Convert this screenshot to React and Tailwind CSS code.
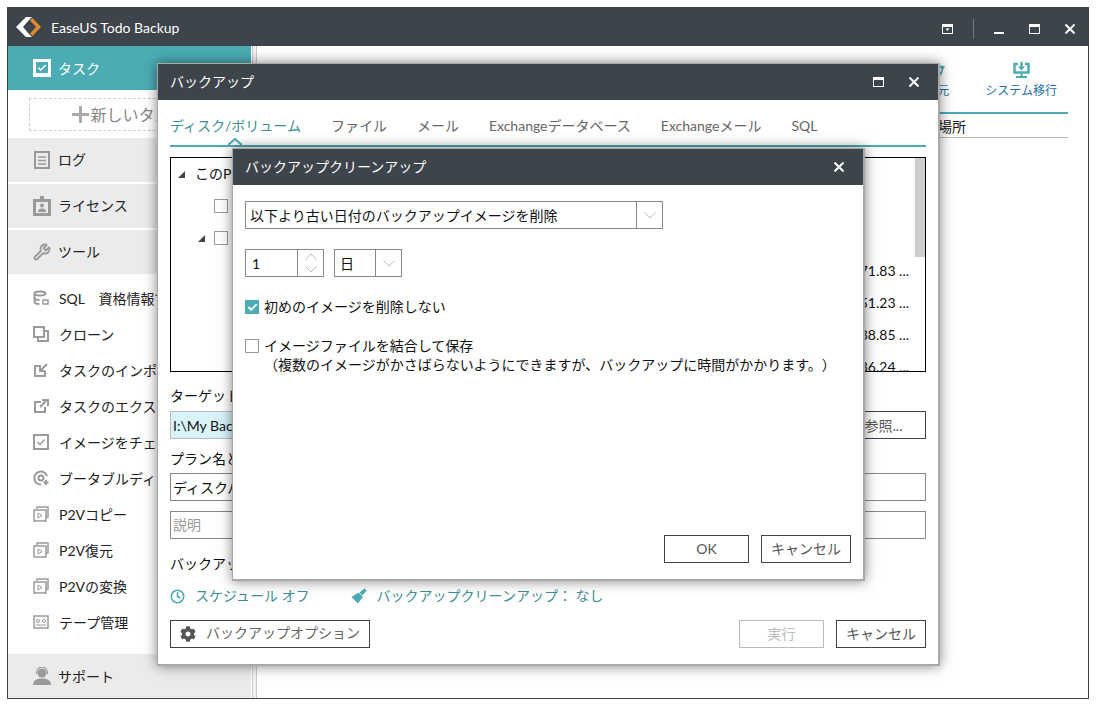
import React from "react";
import { Clock, Wrench, Check } from "lucide-react";
import { FaCog } from "react-icons/fa";

const fontStack = "font-['Lato','Noto_Sans_CJK_JP',sans-serif] [text-spacing-trim:space-all]";

// ================================> small drawn icons
const Logo = () => (
  <svg width="25" height="20" viewBox="0 0 25 20">
    <path d="M10 0 L0 10 L10 20 L16 20 L13 17 L7 10 L13 3 L16 0 Z" fill="#fff" />
    <path d="M14 3.500 L16.500 1 L25 10 L16.500 19 L14 16.500 L20 10 Z" fill="#e08a2e" />
  </svg>
);

const Square = ({ children }) => (
  <svg width="16" height="16" viewBox="0 0 16 16" fill="none" stroke="#9a9a9a" strokeWidth="2">
    {children}
  </svg>
);

const listIcons = {
  sql: (
    <Square>
      <ellipse cx="7" cy="3.500" rx="5.500" ry="2" />
      <path d="M1.500 4v8c0 1 2 2 5 2M1.500 8c0 1 2 2 5 2" />
      <rect x="10" y="10" width="5" height="4" strokeWidth="1.500" />
    </Square>
  ),
  clone: (
    <Square>
      <rect x="1" y="1" width="10" height="10" />
      <path d="M5 11v4h10V5h-4" />
    </Square>
  ),
  import: (
    <Square>
      <path d="M8 4H2v10h10V9" />
      <path d="M14 2L8 8M7 4v5h5" strokeWidth="2" />
    </Square>
  ),
  export: (
    <Square>
      <path d="M8 4H2v10h10V9" />
      <path d="M7 9l6-6M9 2h6v6" strokeWidth="2" />
    </Square>
  ),
  check: (
    <Square>
      <rect x="1" y="1" width="14" height="14" />
      <path d="M4.500 8l2.500 2.500 4.500-5" strokeWidth="1.500" />
    </Square>
  ),
  boot: (
    <Square>
      <path d="M14 6A6.500 6.500 0 1 0 8 14.500" />
      <circle cx="8" cy="8" r="2.500" />
      <path d="M13 10v5M10.500 12.500h5" />
    </Square>
  ),
  p2v: (
    <Square>
      <path d="M4 3V1h11v10h-2" strokeWidth="1.500" />
      <rect x="1" y="4" width="12" height="11" strokeWidth="1.500" />
      <path d="M5 7l4 2.500L5 12z" strokeWidth="1" />
    </Square>
  ),
  tape: (
    <Square>
      <rect x="1" y="2" width="14" height="12" strokeWidth="1.500" />
      <circle cx="5" cy="7" r="1.500" strokeWidth="1" />
      <circle cx="11" cy="7" r="1.500" strokeWidth="1" />
      <path d="M3 11h10" strokeWidth="1" />
    </Square>
  ),
};

const WinMax = () => (
  <svg width="11" height="10" viewBox="0 0 11 10" fill="none" stroke="#fff">
    <rect x="0.500" y="0.500" width="10" height="9" />
    <path d="M0 2h11" strokeWidth="2" />
  </svg>
);

const WinClose = () => (
  <svg width="10" height="10" viewBox="0 0 10 10" stroke="#fff" strokeWidth="2">
    <path d="M0.500 0.500l9 9M9.500 0.500l-9 9" />
  </svg>
);

const Chevron = ({ up = false }) => (
  <svg width="12" height="7" viewBox="0 0 12 7" fill="none" stroke="#bbb">
    <path d={up ? "M0.500 6.500L6 1l5.500 5.500" : "M0.500 0.500L6 6l5.500-5.500"} />
  </svg>
);

const Triangle = () => (
  <svg width="7" height="7" viewBox="0 0 7 7" className="shrink-0">
    <path d="M7 0V7H0z" fill="#444" />
  </svg>
);

// ================================> sidebar
const SideHeader = ({ icon, label }) => (
  <div className="flex h-[44px] items-center gap-[7px] bg-[#ebebeb] pl-[25px] text-[14px] text-[#222]">
    <span className="flex w-[18px] justify-center">{icon}</span>
    <span className="pb-[2px]">{label}</span>
  </div>
);

const sideItems = [
  ["sql", "SQL　資格情報で接続"],
  ["clone", "クローン"],
  ["import", "タスクのインポート"],
  ["export", "タスクのエクスポート"],
  ["check", "イメージをチェック"],
  ["boot", "ブータブルディスクの作成"],
  ["p2v", "P2Vコピー"],
  ["p2v", "P2V復元"],
  ["p2v", "P2Vの変換"],
  ["tape", "テープ管理"],
];

const Sidebar = () => (
  <div className="flex w-[243px] flex-col">
    <div className="flex h-[44px] items-center gap-[7px] bg-[#4bacb4] pl-[25px] text-[14px] text-white">
      <span className="flex h-[18px] w-[18px] items-start justify-center bg-white pt-[3px]">
        <span className="flex h-[11px] w-[12px] items-center justify-center bg-[#4bacb4]">
          <Check size={10} color="#fff" strokeWidth={3.500} />
        </span>
      </span>
      タスク
    </div>
    <div className="px-[21px] pt-[8px] pb-[7px]">
      <div className="flex h-[33px] items-center justify-center gap-[1px] border border-dashed border-[#d0d0d0] text-[16px] text-[#888]">
        <svg width="17" height="17" viewBox="0 0 17 17" fill="#aaa">
          <path d="M7 0h3v7h7v3h-7v7H7v-7H0V7h7z" />
        </svg>
        新しいタスク
      </div>
    </div>
    <div className="flex flex-col gap-[2px]">
      <SideHeader
        label="ログ"
        icon={
          <svg width="16" height="18" viewBox="0 0 16 18" fill="none" stroke="#9a9a9a" strokeWidth="2">
            <rect x="1" y="1" width="14" height="16" />
            <path d="M4 6h8M4 9.500h8M4 13h8" strokeWidth="1.500" />
          </svg>
        }
      />
      <SideHeader
        label="ライセンス"
        icon={
          <svg width="18" height="20" viewBox="0 0 18 20" fill="#9a9a9a">
            <path d="M0 3h7V0h4v3h7v17H0z" />
            <rect x="3" y="6" width="12" height="11" fill="#ebebeb" />
            <circle cx="9" cy="9.500" r="2" />
            <path d="M5 16c0-3 2-3.500 4-3.500s4 .5 4 3.500z" />
          </svg>
        }
      />
      <SideHeader label="ツール" icon={<Wrench size={18} color="#9a9a9a" strokeWidth={2.500} />} />
    </div>
    <div className="flex flex-1 flex-col pt-[6px]">
      {sideItems.map(([icon, label], idx) => (
        <div key={idx} className="flex h-[36px] shrink-0 items-center gap-[10px] whitespace-nowrap pl-[25px] text-[14px] text-[#222]">
          <span className="flex w-[16px] justify-center">{listIcons[icon]}</span>
          {label}
        </div>
      ))}
    </div>
    <div className="flex h-[44px] items-center gap-[7px] bg-[#ebebeb] pl-[25px] text-[14px] text-[#222]">
      <svg width="18" height="18" viewBox="0 0 18 18" fill="#9a9a9a">
        <circle cx="9" cy="6" r="4.500" />
        <path d="M3 7V5.500a6 6 0 0 1 12 0V7h-1.200V5.500a4.800 4.800 0 0 0-9.600 0V7z" />
        <path d="M0 18c0-5 4-6.500 9-6.500s9 1.500 9 6.500z" />
      </svg>
      サポート
    </div>
  </div>
);

// ================================> background page on the right
const MainPane = () => (
  <div className="flex flex-1 flex-col items-end pr-[20px]">
    <div className="flex h-[66px] w-full items-center justify-end pt-[4px]">
      <div className="flex flex-col items-center gap-[4px] pr-[26px] text-[12px] text-[#1c6fa8]">
        <span className="h-[15px] w-[14px] bg-[#4bacb4]" />
        バックアップ
      </div>
      <div className="flex flex-col items-center gap-[4px] pr-[25px] text-[12px] text-[#1c6fa8]">
        <svg width="18" height="16" viewBox="0 0 18 16" fill="none" stroke="#4bacb4" strokeWidth="2">
          <path d="M14 8a6 6 0 1 1-3-5.200" />
          <path d="M11 3.500L17 4l-2.500 5z" fill="#4bacb4" stroke="none" />
        </svg>
        復元
      </div>
      <div className="flex flex-col items-center gap-[4px] px-[11px] text-[12px] text-[#1c6fa8]">
        <svg width="17" height="16" viewBox="0 0 17 16" fill="none" stroke="#4bacb4" strokeWidth="2.500">
          <path d="M5 2H1.500v8.500h14V2H12" />
          <path d="M8.500 0v6" />
          <path d="M5 4.500h7L8.500 8.500z" fill="#4bacb4" stroke="none" />
          <path d="M8.500 11v3M3 15h11" strokeWidth="2" />
        </svg>
        システム移行
      </div>
    </div>
    <div className="h-[2px] w-[400px] bg-[#4bacb4]" />
    <div className="flex h-[24px] w-[400px] items-center border-b border-[#bbb] pl-[270px] pt-[2px] text-[14px] text-[#111]">
      場所
    </div>
  </div>
);

// ================================> backup window
const tabs = ["ファイル", "メール", "Exchangeデータベース", "Exchangeメール", "SQL"];

const sizes = ["71.83 ...", "51.23 ...", "38.85 ...", "36.24 ..."];

const Box = ({ className = "" }) => (
  <span className={`block h-[14px] w-[14px] shrink-0 border border-[#999] bg-white ${className}`} />
);

const BackupWindow = () => (
  <div className="absolute left-[157px] top-[63px] flex h-[603px] w-[783px] flex-col border border-r-2 border-b-2 border-[#a8a8a8] shadow-[0_0_12px_rgba(0,0,0,0.5)]">
    <div className="flex h-[36px] shrink-0 items-center justify-between bg-[#3e444c] pb-[2px] pl-[12px] pr-[19px] text-[14px] text-white">
      バックアップ
      <div className="flex items-center gap-[25px] pt-[2px]">
        <WinMax />
        <WinClose />
      </div>
    </div>
    <div className="flex flex-1 flex-col bg-white px-[12px] text-[#111]">
      <div className="flex h-[45px] shrink-0 items-end gap-[30px] whitespace-nowrap pb-[9px] text-[14px] text-[#666]">
        <span className="text-[#3d8f96]">ディスク/ボリューム</span>
        {tabs.map((tab) => (
          <span key={tab}>{tab}</span>
        ))}
      </div>
      <div className="relative h-[2px] shrink-0 bg-[#4bacb4]">
        <svg width="14" height="7" viewBox="0 0 14 7" className="absolute bottom-full left-[58px]" fill="#fff" stroke="#4bacb4" strokeWidth="2">
          <path d="M0 7l7-6 7 6" />
        </svg>
      </div>
      <div className="mt-[10px] flex h-[215px] shrink-0 overflow-hidden border border-black">
        <div className="flex-1 text-[14px]">
          <div className="flex h-[32px] items-center pl-[7px]">
            <Triangle />
            <span className="ml-[10px] pb-[2px]">このPC</span>
          </div>
          <div className="flex h-[32px] items-center pl-[43px]">
            <Box />
          </div>
          <div className="flex h-[32px] items-center pl-[27px]">
            <Triangle />
            <Box className="ml-[9px]" />
          </div>
          {sizes.map((size) => (
            <div key={size} className="flex h-[32px] items-center justify-end whitespace-nowrap pr-[6px]">
              {size}
            </div>
          ))}
        </div>
        <div className="w-[10px]">
          <div className="h-[99px] bg-[#cdcdcd]" />
        </div>
      </div>
      <div className="mt-[14px] h-[20px] shrink-0 text-[14px] leading-[20px]">ターゲット</div>
      <div className="mt-[5px] flex h-[28px] shrink-0 gap-[6px]">
        <div className="flex flex-1 items-center border border-[#bbb] bg-[#d8f3fa] pl-[2px] text-[14px]">
          I:\My Backups
        </div>
        <div className="flex w-[85px] items-center justify-center border border-[#3e444c] text-[14px] text-[#555]">
          参照...
        </div>
      </div>
      <div className="mb-[2px] mt-[8px] h-[24px] shrink-0 text-[14px] leading-[24px]">プラン名と説明</div>
      <div className="flex h-[28px] shrink-0 items-center border border-[#888] pl-[2px] text-[14px]">
        ディスクパーティション
      </div>
      <div className="mt-[10px] flex h-[28px] shrink-0 items-center border border-[#888] pb-[2px] pl-[2px] text-[14px] text-[#999]">
        説明
      </div>
      <div className="mb-[1px] mt-[14px] h-[22px] shrink-0 text-[14px] leading-[22px]">バックアップ</div>
      <div className="mt-[10px] flex h-[20px] shrink-0 items-center text-[14px] text-[#3d8f96]">
        <Clock size={15} color="#4bacb4" strokeWidth={2.500} />
        <span className="ml-[10px] pb-[2px]">スケジュール オフ</span>
        <svg width="16" height="16" viewBox="0 0 16 16" fill="#4bacb4" className="ml-[41px]">
          <path d="M13.500 0.500l2 2-4 5-3-3z" />
          <path d="M7.500 4.500l4.500 4.500-5 6.500L0.500 9z" />
        </svg>
        <span className="ml-[10px] pb-[2px]">バックアップクリーンアップ： なし</span>
      </div>
      <div className="mt-[14px] flex h-[28px] shrink-0 items-center justify-between gap-[12px] text-[14px]">
        <div className="flex h-full w-[200px] items-center gap-[10px] border border-[#3e444c] pl-[9px] text-[#666]">
          <FaCog size={16} color="#555" />
          <span className="pb-[3px]">バックアップオプション</span>
        </div>
        <div className="flex h-full gap-[12px]">
          <div className="flex w-[85px] items-center justify-center border border-[#bbb] pb-[2px] text-[#bbb]">実行</div>
          <div className="flex w-[90px] items-center justify-center border border-[#3e444c] pb-[2px] text-[#555]">キャンセル</div>
        </div>
      </div>
    </div>
  </div>
);

// ================================> cleanup dialog
const CleanupDialog = () => (
  <div className="absolute left-[232px] top-[148px] flex h-[433px] w-[633px] flex-col border border-r-2 border-b-2 border-[#a8a8a8] shadow-[0_0_12px_rgba(0,0,0,0.5)]">
    <div className="flex h-[36px] shrink-0 items-center justify-between bg-[#3e444c] pb-[2px] pl-[12px] pr-[19px] text-[14px] text-white">
      バックアップクリーンアップ
      <span className="flex pt-[2px]"><WinClose /></span>
    </div>
    <div className="flex flex-1 flex-col bg-white px-[12px] pt-[16px] text-[14px] text-[#111]">
      <div className="flex h-[28px] w-[418px] border border-[#888]">
        <span className="flex flex-1 items-center pl-[4px]">以下より古い日付のバックアップイメージを削除</span>
        <span className="flex w-[26px] items-center justify-center border-l border-[#888]">
          <Chevron />
        </span>
      </div>
      <div className="mt-[20px] flex h-[28px] gap-[10px]">
        <div className="flex w-[79px] border border-[#888]">
          <span className="flex flex-1 items-center pl-[6px]">1</span>
          <span className="flex w-[26px] flex-col items-center justify-center gap-[6px] border-l border-[#888]">
            <Chevron up />
            <Chevron />
          </span>
        </div>
        <div className="flex w-[68px] border border-[#888]">
          <span className="flex flex-1 items-center pl-[5px]">日</span>
          <span className="flex w-[26px] items-center justify-center border-l border-[#888]">
            <Chevron />
          </span>
        </div>
      </div>
      <div className="mt-[20px] flex h-[20px] items-center gap-[5px]">
        <span className="flex h-[14px] w-[14px] items-center justify-center bg-[#4bacb4]">
          <Check size={11} color="#fff" strokeWidth={4} />
        </span>
        <span className="pb-[2px]">初めのイメージを削除しない</span>
      </div>
      <div className="mt-[19px] flex h-[20px] items-center gap-[5px]">
        <Box />
        <span className="pb-[2px]">イメージファイルを結合して保存</span>
      </div>
      <div className="h-[18px] whitespace-nowrap pl-[19px] leading-[18px]">
        （複数のイメージがかさばらないようにできますが、バックアップに時間がかかります。）
      </div>
      <div className="mt-auto mb-[16px] flex h-[28px] justify-end gap-[12px]">
        <div className="flex w-[85px] items-center justify-center border border-[#3e444c] pb-[2px] text-[#555]">OK</div>
        <div className="flex w-[90px] items-center justify-center border border-[#3e444c] pb-[2px] text-[#555]">キャンセル</div>
      </div>
    </div>
  </div>
);

export default function App() {
  return (
    <div className={`relative h-[706px] w-[1096px] overflow-hidden bg-white p-[7px] ${fontStack}`}>
      <div className="flex h-[692px] w-[1082px] flex-col border border-t-0 border-[#3e444c]">
        <div className="flex h-[39px] shrink-0 items-center justify-between bg-[#3e444c] pl-[8px] pr-[13px] text-[14px] text-white">
          <div className="flex items-center gap-[10px]">
            <Logo />
            <span className="pt-[2px]">EaseUS Todo Backup</span>
          </div>
          <div className="flex items-center pt-[4px]">
            <svg width="11" height="10" viewBox="0 0 11 10" fill="none" stroke="#fff">
              <rect x="0.500" y="0.500" width="10" height="9" />
              <path d="M0 2h11" strokeWidth="2" />
              <path d="M3.500 4.500h4L5.500 7z" fill="#fff" stroke="none" />
            </svg>
            <span className="ml-[20px] h-[20px] w-px bg-[#777]" />
            <span className="ml-[20px] mt-[8px] h-[2px] w-[10px] bg-white" />
            <span className="ml-[25px]"><WinMax /></span>
            <span className="ml-[25px]"><WinClose /></span>
          </div>
        </div>
        <div className="flex min-h-0 flex-1">
          <Sidebar />
          <div className="ml-px w-[5px] border-x border-[#ccc] bg-[#f2f2f2]" />
          <MainPane />
        </div>
      </div>
      <BackupWindow />
      <CleanupDialog />
    </div>
  );
}
